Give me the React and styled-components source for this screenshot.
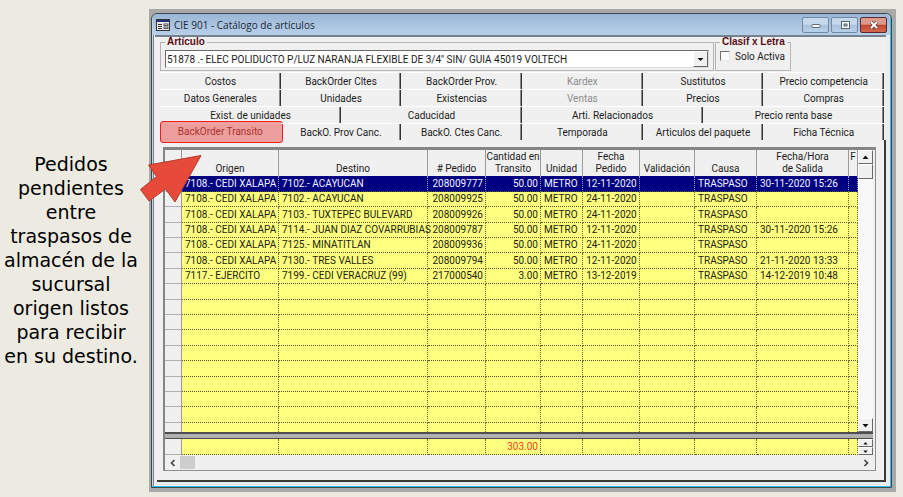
import React from "react";
import styled, { createGlobalStyle, css } from "styled-components";

const Global = createGlobalStyle`
  *, *::before, *::after { box-sizing: border-box; }
  body { margin: 0; background: #edebe1; }
  button, select, input { font: inherit; color: inherit; }
`;

const ui = '"Roboto", "Liberation Sans", sans-serif';

const Page = styled.main`
  display: grid;
  grid-template-columns: 149px minmax(0, 1fr);
  padding: 9px 7px 5px 0;
  position: relative;
  background: #edebe1;
`;

const Note = styled.p`
  margin: 0;
  padding: 143px 7px 0 0;
  font: 19px/24px "DejaVu Sans", sans-serif;
  color: #000;
  text-align: center;
  white-space: nowrap;
`;

const Pointer = styled.svg`
  position: absolute;
  left: 138px;
  top: 153px;
  width: 66px;
  height: 52px;
`;

const Desktop = styled.div`
  background: #a9a9a9;
  padding: 4px 4px 4px 2px;
`;

const Window = styled.section`
  display: flex;
  flex-direction: column;
  border: 1px solid #3c4650;
  border-radius: 6px 6px 0 0;
  background: #e9edf2;
  box-shadow: inset -1px -1px 0 #2cc4e6, inset 1px 0 0 #c9d3de, inset 2px 0 0 #7b8794;
  padding: 0 5px 5px 3px;
  font: 10px/15px ${ui};
  color: #1c1c1c;
`;

const TitleBar = styled.header`
  display: flex;
  align-items: center;
  gap: 4px;
  height: 21px;
  margin: 0 -4px 0 -2px;
  padding: 0 3px;
  border-radius: 5px 5px 0 0;
  background: linear-gradient(#9ab7d7, #b8cfe9);
`;

const Title = styled.h1`
  flex: 1;
  margin: 0;
  font: 10px/16px "Open Sans", "Noto Sans", sans-serif;
  color: #1d2734;
`;

const FormIcon = styled.svg`
  width: 14px;
  height: 12px;
`;

const CaptionButton = styled.button`
  display: flex;
  align-items: center;
  justify-content: center;
  width: 27px;
  height: 16px;
  margin: 0 0 0 -2px;
  padding: 0;
  border: 1px solid ${(p) => (p.$close ? "#5c2a2a" : "#7288a3")};
  border-radius: 2px;
  background: ${(p) =>
    p.$close
      ? "linear-gradient(#dd9a8c 0 45%, #c4452f 50%, #cf6a50)"
      : "linear-gradient(#c6d8ec 0 45%, #a9c1dd 50%, #b9d0e9)"};
  svg { width: 12px; height: 10px; }
`;

const Client = styled.div`
  display: flex;
  flex-direction: column;
  border-top: 2px solid #75828f;
  background: #f0f0f0;
`;

const Filters = styled.div`
  display: flex;
  gap: 1px;
  padding: 0 95px 0 5px;
`;

const Group = styled.fieldset`
  flex: ${(p) => (p.$grow ? "1" : "0 0 76px")};
  min-width: 0;
  margin: 0;
  padding: 0 4px 3px;
  border: 1px solid #b4b4b4;
  height: 34px;
`;

const Legend = styled.legend`
  padding: 0 2px;
  font: bold 10px/10px "Liberation Sans", sans-serif;
  white-space: nowrap;
  color: #5b0d16;
`;

const Combo = styled.div`
  display: grid;
  grid-template-columns: minmax(0, 1fr) 15px;
  height: 18px;
  margin: 3px 0 0;
  border: 1px solid #dcdcdc;
  border-top-color: #6a6a6a;
  border-left-color: #6a6a6a;
  background: #fff;
  svg {
    grid-area: 1 / 2;
    width: 15px;
    height: 16px;
    pointer-events: none;
    background: #f0f0f0;
    border: 1px solid #fff;
    border-right-color: #666;
    border-bottom-color: #666;
  }
`;

const ComboSelect = styled.select`
  grid-area: 1 / 1 / 2 / 3;
  appearance: none;
  min-width: 0;
  border: 0;
  padding: 0 16px 0 1px;
  background: transparent;
  line-height: 15px;
  outline: 0;
`;

const CheckLabel = styled.label`
  display: flex;
  align-items: center;
  gap: 5px;
  height: 18px;
  white-space: nowrap;
`;

const Check = styled.input`
  appearance: none;
  width: 10px;
  height: 10px;
  margin: 0;
  border: 1px solid #e6e6e6;
  border-top-color: #707070;
  border-left-color: #707070;
  background: #fff;
`;

const Tabs = styled.div`
  display: flex;
  flex-direction: column;
  padding: 1px 2px 0 5px;
`;

const TabRow = styled.div`
  display: flex;
  height: 17px;
`;

const Tab = styled.button`
  flex: 1 1 0;
  min-width: 0;
  position: relative;
  padding: 1px 0 0;
  border: 0;
  border-top: 1px solid #fff;
  background: transparent;
  line-height: 15px;
  white-space: nowrap;
  color: ${(p) => (p.disabled ? "#8c8c8c" : "#1c1c1c")};
  box-shadow: inset -1px 0 0 #333, inset -2px 0 0 #8a8a8a;
  ${(p) =>
    p.$active &&
    css`
      padding: 0 0 3px;
      color: #7c2c2c;
      box-shadow: none;
      &::after {
        content: "";
        position: absolute;
        inset: -3px -2px -3px 0;
        border: 1px solid #f21d1d;
        border-radius: 3px;
        background: rgba(229, 57, 53, 0.45);
      }
    `}
`;

const Panel = styled.div`
  margin: 0 0 0 2px;
  padding: 7px 8px 9px 6px;
  border-right: 2px solid #3a3a3a;
  border-bottom: 2px solid #3a3a3a;
`;

const Grid = styled.div`
  border: 1px solid #8e8e8e;
  border-top: 3px solid #858585;
  border-left: 2px solid #858585;
  padding-right: 2px;
`;

const Pane = styled.div`
  display: grid;
  grid-template-columns: minmax(0, 1fr) 15px;
  align-items: start;
  height: ${(p) => (p.$foot ? "16px" : "282px")};
  overflow: hidden;
`;

const Table = styled.table`
  width: 100%;
  table-layout: fixed;
  border-collapse: separate;
  border-spacing: 0;
`;

const Col = styled.col`
  width: ${(p) => p.$w};
`;

const Th = styled.th`
  height: 26px;
  padding: 0 0 1px;
  border-right: 1px solid #9a9a9a;
  background: #f0f0f0;
  font-weight: normal;
  line-height: 12px;
  vertical-align: bottom;
  white-space: pre;
  overflow: hidden;
`;

const Tr = styled.tr`
  height: 15px;
  &:nth-child(5n + 1), &:nth-child(5n + 3) { height: 16px; }
`;

const Td = styled.td`
  padding: 0 2px 0 3px;
  white-space: nowrap;
  line-height: 14px;
  text-align: ${(p) => p.$align || "left"};
  color: ${(p) => (p.$total ? "#f0451e" : p.$selected ? "#f2f2ff" : "#24240c")};
  background: ${(p) => (p.$selected ? "#000080" : "#ffff80")};
  border-right: 1px dotted ${(p) => (p.$selected ? "#a0a0c0" : "#66662e")};
  border-bottom: 1px dotted #55552a;
`;

const RowMark = styled.td`
  padding: 0;
  background: #f0f0f0;
  border-right: 1px solid #9a9a9a;
  border-bottom: 1px solid #b0b0b0;
`;

const Splitter = styled.div`
  height: 7px;
  background: #b0b0b0;
  border-top: 2px solid #4e4e4e;
  border-bottom: 1px solid #4e4e4e;
`;

const VScroll = styled.div`
  display: flex;
  flex-direction: column;
  justify-content: space-between;
  height: 282px;
  background: #f8f8f8;
`;

const Stack = styled.div`
  display: flex;
  flex-direction: column;
`;

const bevel = css`
  background: #f0f0f0;
  border: 1px solid #fff;
  border-right-color: #6a6a6a;
  border-bottom-color: #6a6a6a;
`;

const ScrollButton = styled.button`
  ${bevel}
  display: flex;
  align-items: center;
  justify-content: center;
  height: ${(p) => (p.$small ? "8px" : "14px")};
  padding: 0;
  svg { width: ${(p) => (p.$small ? "5px" : "7px")}; height: 5px; }
`;

const Thumb = styled.div`
  ${bevel}
  height: 15px;
`;

const HScroll = styled.div`
  display: flex;
  align-items: center;
  height: 15px;
`;

const HArrow = styled.button`
  display: flex;
  align-items: center;
  justify-content: center;
  width: 15px;
  padding: 0;
  border: 0;
  background: transparent;
  svg { width: 6px; height: 8px; }
`;

const Track = styled.div`
  flex: 1;
`;

const HThumb = styled.div`
  width: 15px;
  height: 13px;
  background: #cdcdcd;
`;

const Triangle = ({ down }) => (
  <svg viewBox="0 0 7 5" aria-hidden="true">
    <path d={down ? "M0.5 1h6L3.5 4.5z" : "M0.5 4h6L3.5 0.5z"} fill="#111" />
  </svg>
);

const Angle = ({ right }) => (
  <svg viewBox="0 0 6 8" aria-hidden="true">
    <path d={right ? "M1.5 1l3 3-3 3" : "M4.5 1l-3 3 3 3"} fill="none" stroke="#444" strokeWidth="1.7" />
  </svg>
);

const tabRows = [
  ["Costos", "BackOrder Cltes", "BackOrder Prov.", "Kardex", "Sustitutos", "Precio competencia"],
  ["Datos Generales", "Unidades", "Existencias", "Ventas", "Precios", "Compras"],
  ["Exist. de unidades", "Caducidad", "Arti. Relacionados", "Precio renta base"],
  ["BackOrder Transito", "BackO. Prov Canc.", "BackO. Ctes Canc.", "Temporada", "Articulos del paquete", "Ficha Técnica"],
];
const disabledTabs = ["Kardex", "Ventas"];
const activeTab = "BackOrder Transito";

const columns = [
  { label: "Origen", w: "97px" },
  { label: "Destino", w: "149px" },
  { label: "# Pedido", w: "58px", align: "right" },
  { label: "Cantidad en\nTransito", w: "55px", align: "right" },
  { label: "Unidad", w: "42px" },
  { label: "Fecha\nPedido", w: "57px", align: "center" },
  { label: "Validación", w: "55px" },
  { label: "Causa", w: "62px" },
  { label: "Fecha/Hora\nde Salida", w: "92px" },
  { label: "F\n\u00a0", w: "auto" },
];

const rows = [
  ["7108.- CEDI XALAPA", "7102.- ACAYUCAN", "208009777", "50.00", "METRO", "12-11-2020", "", "TRASPASO", "30-11-2020 15:26", ""],
  ["7108.- CEDI XALAPA", "7102.- ACAYUCAN", "208009925", "50.00", "METRO", "24-11-2020", "", "TRASPASO", "", ""],
  ["7108.- CEDI XALAPA", "7103.- TUXTEPEC BULEVARD", "208009926", "50.00", "METRO", "24-11-2020", "", "TRASPASO", "", ""],
  ["7108.- CEDI XALAPA", "7114.- JUAN DIAZ COVARRUBIAS", "208009787", "50.00", "METRO", "12-11-2020", "", "TRASPASO", "30-11-2020 15:26", ""],
  ["7108.- CEDI XALAPA", "7125.- MINATITLAN", "208009936", "50.00", "METRO", "24-11-2020", "", "TRASPASO", "", ""],
  ["7108.- CEDI XALAPA", "7130.- TRES VALLES", "208009794", "50.00", "METRO", "12-11-2020", "", "TRASPASO", "21-11-2020 13:33", ""],
  ["7117.- EJERCITO", "7199.- CEDI VERACRUZ (99)", "217000540", "3.00", "METRO", "13-12-2019", "", "TRASPASO", "14-12-2019 10:48", ""],
];
const emptyRow = columns.map(() => "");
const bodyRows = [...rows, ...Array.from({ length: 10 }, () => emptyRow)];
const totals = columns.map((c, i) => (i === 3 ? "303.00" : ""));

const Columns = () => (
  <colgroup>
    <Col $w="17px" />
    {columns.map((c) => <Col key={c.label} $w={c.w} />)}
  </colgroup>
);

const DataRow = ({ cells, selected, total }) => (
  <Tr>
    <RowMark />
    {cells.map((text, i) => (
      <Td key={i} $align={columns[i].align} $selected={selected} $total={total}>{text}</Td>
    ))}
  </Tr>
);

export default function App() {
  return (
    <Page>
      <Global />
      <Note>
        Pedidos<br />pendientes<br />entre<br />traspasos de<br />almacén de la<br />
        sucursal<br />origen listos<br />para recibir<br />en su destino.
      </Note>
      <Desktop>
        <Window>
          <TitleBar>
            <FormIcon viewBox="0 0 14 12" aria-hidden="true">
              <rect x="0.5" y="0.5" width="13" height="11" fill="#e8e8e8" stroke="#333" />
              <rect x="1" y="1" width="12" height="2" fill="#20307c" />
              <path d="M2 5.5h4M2 7.5h4M2 9.5h4" stroke="#333" />
              <rect x="8" y="5" width="4" height="1.5" fill="#fff" stroke="#333" strokeWidth="0.8" />
              <rect x="8" y="8" width="4" height="1.5" fill="#fff" stroke="#333" strokeWidth="0.8" />
            </FormIcon>
            <Title>CIE 901 - Catálogo de artículos</Title>
            <CaptionButton aria-label="Minimizar">
              <svg viewBox="0 0 12 10"><rect x="2" y="4.5" width="8" height="3" rx="0.5" fill="#fff" stroke="#566" strokeWidth="0.9" /></svg>
            </CaptionButton>
            <CaptionButton aria-label="Maximizar">
              <svg viewBox="0 0 12 10"><rect x="2.5" y="1.500" width="8" height="7" fill="#fff" stroke="#566" /><rect x="5" y="4" width="3" height="2" fill="#a9c1dd" stroke="#566" /></svg>
            </CaptionButton>
            <CaptionButton $close aria-label="Cerrar">
              <svg viewBox="0 0 12 10"><path d="M3 2l6 6M9 2l-6 6" stroke="#5c3a3a" strokeWidth="3.4" /><path d="M3 2l6 6M9 2l-6 6" stroke="#fff" strokeWidth="2" /></svg>
            </CaptionButton>
          </TitleBar>
          <Client>
            <Filters>
              <Group $grow>
                <Legend>Artículo</Legend>
                <Combo>
                  <ComboSelect aria-label="Artículo">
                    <option>51878 .- ELEC POLIDUCTO P/LUZ NARANJA FLEXIBLE DE 3/4'' SIN/ GUIA 45019 VOLTECH</option>
                  </ComboSelect>
                  <svg viewBox="0 0 13 14" aria-hidden="true"><path d="M3.5 6h6L6.500 9z" fill="#111" /></svg>
                </Combo>
              </Group>
              <Group>
                <Legend>Clasif x Letra</Legend>
                <CheckLabel><Check type="checkbox" />Solo Activa</CheckLabel>
              </Group>
            </Filters>
            <Tabs role="tablist">
              {tabRows.map((row) => (
                <TabRow key={row[0]}>
                  {row.map((name) => (
                    <Tab key={name} role="tab" aria-selected={name === activeTab} $active={name === activeTab} disabled={disabledTabs.includes(name)}>
                      {name}
                    </Tab>
                  ))}
                </TabRow>
              ))}
            </Tabs>
            <Panel role="tabpanel" aria-label={activeTab}>
              <Grid>
                <Pane>
                  <Table>
                    <Columns />
                    <thead>
                      <tr>
                        <Th />
                        {columns.map((c) => <Th key={c.label} scope="col">{c.label}</Th>)}
                      </tr>
                    </thead>
                    <tbody>
                      {bodyRows.map((cells, i) => <DataRow key={i} cells={cells} selected={i === 0} />)}
                    </tbody>
                  </Table>
                  <VScroll>
                    <Stack>
                      <ScrollButton aria-label="Subir"><Triangle /></ScrollButton>
                      <Thumb />
                    </Stack>
                    <ScrollButton aria-label="Bajar"><Triangle down /></ScrollButton>
                  </VScroll>
                </Pane>
                <Splitter />
                <Pane $foot>
                  <Table>
                    <Columns />
                    <tbody><DataRow cells={totals} total /></tbody>
                  </Table>
                  <Stack>
                    <ScrollButton $small aria-label="Total anterior"><Triangle /></ScrollButton>
                    <ScrollButton $small aria-label="Total siguiente"><Triangle down /></ScrollButton>
                  </Stack>
                </Pane>
                <HScroll>
                  <HArrow aria-label="Izquierda"><Angle /></HArrow>
                  <Track><HThumb /></Track>
                  <HArrow aria-label="Derecha"><Angle right /></HArrow>
                </HScroll>
              </Grid>
            </Panel>
          </Client>
        </Window>
      </Desktop>
      <Pointer viewBox="138 153 66 52" aria-hidden="true">
        <path d="M201 155.500L148.500 165l8 11.500-16 13L149 201l16.500-12 9.500 13z" fill="#e64a38" stroke="#b33a2c" />
      </Pointer>
    </Page>
  );
}
